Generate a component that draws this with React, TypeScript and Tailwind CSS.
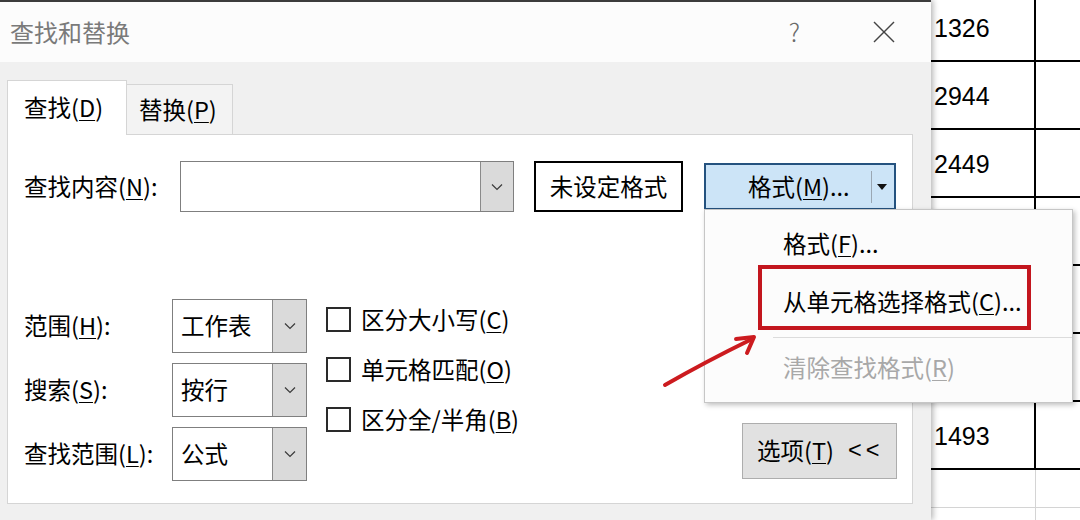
import React from "react";

const F = { fontFamily: '"Noto Sans CJK SC", "Noto Sans", sans-serif' };

function U({ c }: { c: string }) {
  return <span className="underline decoration-1 underline-offset-[3px]">{c}</span>;
}

function Chevron() {
  return (
    <svg width="12" height="8" viewBox="0 0 12 8">
      <polyline points="1,1.5 6,6.5 11,1.5" fill="none" stroke="#3a3a3a" strokeWidth="1.2" />
    </svg>
  );
}

function Select({ value }: { value: string }) {
  return (
    <div className="flex h-[54px] w-[135px] border border-[#7f7f7f] bg-white">
      <div className="flex flex-1 items-center pl-[8px] text-[23.5px] text-black">{value}</div>
      <div className="flex w-[34px] items-center justify-center border-l border-[#8a8a8a] bg-[#dadada]">
        <Chevron />
      </div>
    </div>
  );
}

function Check({ label }: { label: React.ReactNode }) {
  return (
    <div className="flex h-[25px] items-center">
      <div className="h-[25px] w-[25px] border-2 border-[#2a2a2a] bg-white" />
      <div className="ml-[10px] whitespace-nowrap text-[23.5px] text-black">{label}</div>
    </div>
  );
}

export default function App() {
  const rows: string[] = ["1326", "2944", "2449", "", "", "", "1493"];
  return (
    <div className="relative flex h-[520px] w-[1080px] overflow-hidden bg-white" style={F}>
      {/* Dialog */}
      <div className="relative z-10 flex h-full w-[931px] shrink-0 flex-col bg-[#f0f0f0] shadow-[2px_0_6px_rgba(0,0,0,0.3)]">
        <div className="h-[2px] bg-[#3c3c3c]" />
        <div className="flex h-[60px] items-center bg-[#fcfcfc] pl-[10px]">
          <div className="text-[24px] text-[#7a7a7a]">查找和替换</div>
          <div className="ml-auto mr-[72px] text-[25px] font-light text-[#6a6a6a]">?</div>
          <svg width="24" height="24" viewBox="0 0 24 24" className="mr-[35px]">
            <line x1="2" y1="2" x2="22" y2="22" stroke="#444" strokeWidth="1.4" />
            <line x1="22" y1="2" x2="2" y2="22" stroke="#444" strokeWidth="1.4" />
          </svg>
        </div>
        <div className="flex flex-1 flex-col pl-[7px] pr-[18px] pt-[18px]">
          {/* tabs */}
          <div className="relative z-10 flex h-[54px] items-end">
            <div className="-mb-px flex h-[55px] w-[120px] items-center border-l border-r border-t border-[#d5d5d5] bg-white pl-[16px] text-[23.5px] text-black">
              查找(<U c="D" />)
            </div>
            <div className="flex h-[50px] w-[106px] items-center border-r border-t border-[#d5d5d5] bg-[#f3f3f3] pl-[12px] text-[23.5px] text-black">
              替换(<U c="P" />)
            </div>
          </div>
          {/* panel */}
          <div className="flex h-[370px] flex-col border border-[#d5d5d5] bg-white">
            <div className="mt-[26px] flex items-center">
              <div className="w-[172px] whitespace-nowrap pl-[16px] text-[23.5px] text-black">
                查找内容(<U c="N" />):
              </div>
              <div className="flex h-[51px] w-[334px] border border-[#7f7f7f] bg-white">
                <div className="flex-1" />
                <div className="flex w-[33px] items-center justify-center border-l border-[#8a8a8a] bg-[#dadada]">
                  <Chevron />
                </div>
              </div>
              <div className="ml-[20px] flex h-[51px] w-[149px] items-center justify-center border-2 border-black bg-white text-[23.5px] text-black">
                未设定格式
              </div>
              <div className="ml-[21px] flex h-[47px] w-[192px] items-center border-2 border-[#24527f] bg-[#cce4f7]">
                <div className="flex-1 whitespace-nowrap pl-[42px] text-[23.5px] text-black">
                  格式(<U c="M" />)...
                </div>
                <div className="h-[32px] w-px bg-[#9aa7b3]" />
                <svg width="22" height="10" viewBox="0 0 22 10">
                  <polygon points="5,2 15,2 10,8" fill="#111" />
                </svg>
              </div>
            </div>
            <div className="mt-[87px] flex">
              <div className="flex w-[164px] flex-col gap-[10px] pl-[16px]">
                <div className="flex h-[54px] items-center text-[23.5px] text-black">
                  范围(<U c="H" />):
                </div>
                <div className="flex h-[54px] items-center text-[23.5px] text-black">
                  搜索(<U c="S" />):
                </div>
                <div className="flex h-[54px] items-center whitespace-nowrap text-[23.5px] text-black">
                  查找范围(<U c="L" />):
                </div>
              </div>
              <div className="flex flex-col gap-[10px]">
                <Select value="工作表" />
                <Select value="按行" />
                <Select value="公式" />
              </div>
              <div className="ml-[19px] mt-[8px] flex flex-col gap-[25px]">
                <Check label={<>区分大小写(<U c="C" />)</>} />
                <Check label={<>单元格匹配(<U c="O" />)</>} />
                <Check label={<>区分全/半角(<U c="B" />)</>} />
              </div>
              <div className="ml-auto mr-[15px] mt-[124px] flex h-[56px] w-[155px] items-center whitespace-nowrap border border-[#adadad] bg-[#e1e1e1] pl-[14px] text-[23.5px] text-black">
                选项(<U c="T" />)
                <span className="ml-[14px] tracking-[4px]" style={{ fontFamily: '"Liberation Sans", sans-serif' }}>
                  &lt;&lt;
                </span>
              </div>
            </div>
          </div>
        </div>
      </div>

      {/* Spreadsheet behind */}
      <div className="relative z-0 flex-1 overflow-hidden bg-white" style={{ fontFamily: '"Liberation Sans", Arial, sans-serif' }}>
        <div className="-mt-[6px] flex flex-col">
          {rows.map((n, i) => (
            <div key={i} className="flex h-[68px] border-b-2 border-black">
              <div className="flex w-[105px] items-center border-r-2 border-black pl-[3px] pt-[3px] text-[25px] text-black">
                {n}
              </div>
              <div className="flex-1" />
            </div>
          ))}
          {[0, 1].map((i) => (
            <div key={"g" + i} className="flex h-[38px] border-b border-[#d4d4d4]">
              <div className="w-[105px] border-r border-[#d4d4d4]" />
              <div className="flex-1" />
            </div>
          ))}
        </div>
      </div>

      {/* Dropdown menu */}
      <div className="absolute left-[704px] top-[209px] z-20 flex h-[194px] w-[369px] flex-col border border-[#c6c6c6] bg-[#fcfcfc] pt-[5px] shadow-[2px_2px_5px_rgba(0,0,0,0.25)]">
        <div className="flex h-[58px] items-center whitespace-nowrap pl-[78px] text-[23.5px] text-black">
          格式(<U c="F" />)...
        </div>
        <div className="flex h-[58px] items-center whitespace-nowrap pl-[78px] text-[23.5px] text-black">
          从单元格选择格式(<U c="C" />)...
        </div>
        <div className="ml-[68px] mt-[6px] h-px bg-[#dcdcdc]" />
        <div className="flex h-[60px] items-center whitespace-nowrap pl-[78px] text-[23.5px] text-[#a8a8a8]">
          清除查找格式(<U c="R" />)
        </div>
      </div>

      {/* red annotation box */}
      <div className="absolute left-[758px] top-[265px] z-30 h-[65px] w-[273px] border-[4px] border-[#c3161e]" />

      {/* red arrow */}
      <svg className="pointer-events-none absolute left-0 top-0 z-30" width="1080" height="520" viewBox="0 0 1080 520">
        <path d="M665 385 Q705 362 752 339" fill="none" stroke="#cc1b1f" strokeWidth="4" strokeLinecap="round" />
        <path d="M736 339 L754 337 L747 353" fill="none" stroke="#cc1b1f" strokeWidth="4" strokeLinecap="round" strokeLinejoin="round" />
      </svg>
    </div>
  );
}
